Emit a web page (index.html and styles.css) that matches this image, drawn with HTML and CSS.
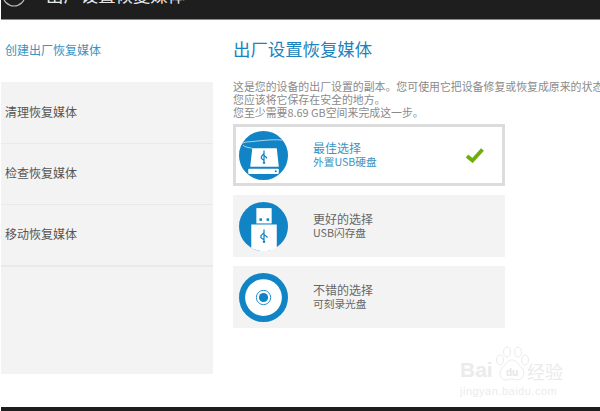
FILE: index.html
```html
<!DOCTYPE html>
<html lang="zh-CN">
<head>
<meta charset="utf-8">
<title>出厂设置恢复媒体</title>
<link rel="stylesheet" href="styles.css">
</head>
<body>
<div class="page">
  <header class="topbar">
    <svg class="back" width="24" height="24" viewBox="0 0 24 24"><circle cx="12" cy="12" r="11" fill="none" stroke="#bbb" stroke-width="1.2"/></svg>
    <span class="topbar-title">出厂设置恢复媒体</span>
  </header>
  <div class="main">
    <nav class="sidebar">
      <div class="nav-current">创建出厂恢复媒体</div>
      <div class="nav-list">
        <div class="nav-item">清理恢复媒体</div>
        <div class="nav-item">检查恢复媒体</div>
        <div class="nav-item nav-last">移动恢复媒体</div>
      </div>
    </nav>
    <section class="content">
      <h1 class="title">出厂设置恢复媒体</h1>
      <p class="intro">这是您的设备的出厂设置的副本。您可使用它把设备修复或恢复成原来的状态<br>您应该将它保存在安全的地方。<br>您至少需要8.69 GB空间来完成这一步。</p>
      <div class="option option-selected">
        <svg class="icon" width="49" height="49" viewBox="0 0 48 48">
          <circle cx="24" cy="24" r="24" fill="#1084c4"/>
          <path d="M2 13c3-3 8-2 14-3 10-1 20-2 26-1M4 14c2 2 5 2 9 3" fill="none" stroke="#cfe6f3" stroke-width="0.8"/>
          <path d="M13 17h24l2 18H11z" fill="#fff"/>
          <rect x="9" y="37" width="30" height="5" rx="1" fill="#fff"/>
          <circle cx="36" cy="39.500" r="1" fill="#1084c4"/>
          <path d="M24.500 19v11M24.500 22l-2.500 3v2l2.500 2M24.500 24l2.500 2v1" fill="none" stroke="#1084c4" stroke-width="1.200"/>
          <circle cx="24.500" cy="31" r="1.200" fill="#1084c4"/>
        </svg>
        <div class="option-text option-text-blue">
          <div>最佳选择</div>
          <div class="option-sub">外置USB硬盘</div>
        </div>
        <svg class="check" width="18" height="15" viewBox="0 0 18 15"><path d="M1 8l5.500 4.500L16.500 1.500" fill="none" stroke="#6fae0c" stroke-width="3.800"/></svg>
      </div>
      <div class="option">
        <svg class="icon" width="49" height="49" viewBox="0 0 48 48">
          <circle cx="24" cy="24" r="24" fill="#1084c4"/>
          <rect x="17" y="6" width="15" height="15" fill="#fff"/>
          <rect x="20" y="16" width="2.500" height="2.500" fill="#1084c4"/>
          <rect x="27" y="16" width="2.500" height="2.500" fill="#1084c4"/>
          <path d="M12 22h25v22.700A24 24 0 0 1 12 44.700z" fill="#fff"/>
          <path d="M24.500 27v11M24.500 30l-3 3v2l3 2M24.500 32l3 2v1" fill="none" stroke="#1084c4" stroke-width="1.200"/>
          <circle cx="24.500" cy="39" r="1.200" fill="#1084c4"/>
        </svg>
        <div class="option-text">
          <div>更好的选择</div>
          <div class="option-sub">USB闪存盘</div>
        </div>
      </div>
      <div class="option">
        <svg class="icon" width="49" height="49" viewBox="0 0 48 48">
          <circle cx="24" cy="24" r="24" fill="#1084c4"/>
          <circle cx="24" cy="24" r="18" fill="#fff"/>
          <circle cx="24" cy="24" r="7" fill="none" stroke="#1084c4" stroke-width="0.900"/>
          <circle cx="24" cy="24" r="4.500" fill="#1084c4"/>
        </svg>
        <div class="option-text">
          <div>不错的选择</div>
          <div class="option-sub">可刻录光盘</div>
        </div>
      </div>
    </section>
  </div>
  <footer class="bottombar"></footer>
  <div class="watermark">
    <div class="wm-row">
      <span class="wm-bai">Bai</span>
      <svg class="wm-paw" width="34" height="36" viewBox="0 0 34 36">
        <g fill="#fff" stroke="#ebebeb" stroke-width="1">
          <ellipse cx="5" cy="14" rx="3.500" ry="5"/>
          <ellipse cx="12" cy="6" rx="3.500" ry="5"/>
          <ellipse cx="23" cy="6" rx="3.500" ry="5"/>
          <ellipse cx="30" cy="14" rx="3.500" ry="5"/>
          <path d="M17 14c4 0 6 4 10 8 4 5 1 12-5 12-2 0-3-1-5-1s-3 1-6 1c-6 0-8-7-4-12 4-4 6-8 10-8z"/>
        </g>
        <text class="wm-du" x="17" y="30" text-anchor="middle">du</text>
      </svg>
      <span class="wm-jy">经验</span>
    </div>
    <div class="wm-url">jingyan.baidu.com</div>
  </div>
</div>
</body>
</html>
```
FILE: styles.css
```css
html, body {
  margin: 0;
  padding: 0;
  background: #fff;
}
.page {
  position: relative;
  width: 600px;
  height: 411px;
  overflow: hidden;
  display: flex;
  flex-direction: column;
  font-family: "Noto Sans CJK SC", "Open Sans", sans-serif;
  color: #555;
}
.topbar {
  height: 19px;
  margin-left: 1px;
  flex: none;
  background: #1e1e1e;
  border-bottom: 1px solid #8a8a8a;
  display: flex;
  align-items: flex-start;
  overflow: hidden;
}
.back {
  flex: none;
  margin: -17px 0 0 1px;
}
.topbar-title {
  flex: none;
  margin: -18px 0 0 20px;
  font-size: 17.400px;
  line-height: 26px;
  color: #e8e8e8;
}
.main {
  flex: 1;
  display: flex;
  min-height: 0;
  padding-bottom: 33px;
}
.sidebar {
  width: 212px;
  margin-left: 1px;
  flex: none;
  display: flex;
  flex-direction: column;
}
.nav-current {
  height: 62px;
  padding: 21px 0 0 4px;
  box-sizing: border-box;
  font-size: 12px;
  line-height: 18px;
  color: #3a93c2;
}
.nav-list {
  height: 292px;
  background: #f3f3f3;
}
.nav-item {
  height: 61.500px;
  box-sizing: border-box;
  padding: 0 0 2px 4px;
  display: flex;
  align-items: center;
  font-size: 12px;
  color: #555;
  border-bottom: 1px solid #e9e9e9;
}
.nav-last {
  border-bottom-width: 2px;
}
.content {
  flex: 1;
  padding: 17px 0 0 20px;
  min-width: 0;
  overflow: hidden;
}
.title {
  margin: 0;
  font-size: 17.400px;
  line-height: 24px;
  font-weight: 400;
  color: #1b83bd;
}
.intro {
  margin: 19px 0 0;
  width: 400px;
  font-size: 10.900px;
  line-height: 13px;
  color: #8a8a8a;
}
.option {
  width: 272px;
  height: 62px;
  margin-bottom: 9px;
  box-sizing: border-box;
  background: #f3f3f3;
  display: flex;
  align-items: center;
  padding-left: 6px;
}
.option-selected {
  margin-top: 5px;
  background: #fff;
  border: 3px solid #dcdcdc;
  padding-left: 3px;
  padding-right: 18px;
}
.icon {
  flex: none;
}
.option-text {
  margin-left: 25px;
  flex: 1;
  font-size: 12px;
  line-height: 14px;
  color: #666;
}
.option-sub {
  font-size: 10.700px;
}
.option-text-blue {
  color: #3a93c2;
}
.check {
  flex: none;
}
.bottombar {
  height: 4px;
  margin-left: 1px;
  flex: none;
  background: #1e1e1e;
}
.watermark {
  position: absolute;
  left: 460px;
  top: 346px;
  width: 120px;
  color: #ebebeb;
  font-family: "Liberation Sans", sans-serif;
}
.wm-row {
  display: flex;
  align-items: flex-end;
}
.wm-bai {
  font-size: 21px;
  line-height: 24px;
  width: 35px;
  font-weight: 700;
}
.wm-paw {
  flex: none;
}
.wm-du {
  font-size: 10px;
  font-weight: 700;
  fill: #e6e6e6;
}
.wm-jy {
  font-family: "Noto Sans CJK SC", sans-serif;
  font-size: 18px;
  line-height: 22px;
  white-space: nowrap;
  margin-left: -2px;
}
.wm-url {
  font-size: 11px;
  line-height: 14px;
  letter-spacing: 0.500px;
  white-space: nowrap;
  margin-top: 2px;
}
```
